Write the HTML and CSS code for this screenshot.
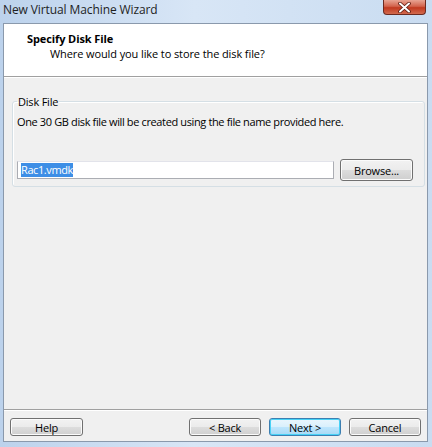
FILE: index.html
```html
<!DOCTYPE html>
<html lang="en">
<head>
  <meta charset="UTF-8">
  <meta name="viewport" content="width=device-width, initial-scale=1.0">
  <title>New Virtual Machine Wizard</title>
  <link rel="stylesheet" href="styles.css">
</head>
<body>
  <div class="window">
    <div class="titlebar">
      <span class="title">New Virtual Machine Wizard</span>
      <button class="close-button" aria-label="Close">
        <svg width="13" height="11" viewBox="0 0 13 11">
          <path d="M2 1.5 L11 9.5 M11 1.5 L2 9.5" stroke="#5a1a10" stroke-width="3.6" stroke-linecap="round"/>
          <path d="M2 1.5 L11 9.5 M11 1.5 L2 9.5" stroke="#fff" stroke-width="2" stroke-linecap="round"/>
        </svg>
      </button>
    </div>

    <div class="client">
      <div class="header">
        <div class="header-title">Specify Disk File</div>
        <div class="header-sub">Where would you like to store the disk file?</div>
      </div>

      <div class="content">
        <fieldset class="group">
          <legend>Disk File</legend>
          <p class="desc">One 30 GB disk file will be created using the file name provided here.</p>
          <div class="file-row">
            <div class="field"><span class="selected">Rac1.vmdk</span></div>
            <button class="btn browse-button">Browse...</button>
          </div>
        </fieldset>
      </div>

      <div class="footer">
        <button class="btn">Help</button>
        <div class="nav">
          <button class="btn">&lt; Back</button>
          <button class="btn default-button">Next &gt;</button>
          <button class="btn">Cancel</button>
        </div>
      </div>
    </div>
  </div>
</body>
</html>
```

FILE: styles.css
```css
body {
  margin: 0;
  font-family: "Open Sans", "Noto Sans", sans-serif;
  background: #c5d8ee;
}
.window {
  width: 432px;
  height: 447px;
  display: flex;
  flex-direction: column;
  background: linear-gradient(to right, #bcd2ec, #d8e6f6 45%, #c9dcf1);
}
.titlebar {
  height: 23px;
  display: flex;
  justify-content: space-between;
  align-items: flex-start;
}
.title {
  font-size: 12px;
  color: #1e1e1e;
  padding: 1px 0 0 3px;
  letter-spacing: -0.1px;
}
.close-button {
  width: 43px;
  height: 15px;
  margin-right: 6px;
  padding: 0;
  border: 1px solid #6b2a20;
  border-top: none;
  border-radius: 0 0 4px 4px;
  background: linear-gradient(to bottom, #e8a493, #d2634c 45%, #c1391f 55%, #d26a4e);
  display: flex;
  align-items: center;
  justify-content: center;
}
.client {
  flex: 1;
  margin: 0 4px 5px 3px;
  border: 1px solid #8a99ac;
  background: #f0f0f0;
  display: flex;
  flex-direction: column;
  font-size: 11px;
  color: #000;
}
.header {
  height: 53px;
  background: #fff;
  border-bottom: 1px solid #a0a0a0;
  box-shadow: 0 1px 0 #fff;
  padding: 7px 0 0 23px;
  box-sizing: border-box;
}
.header-title {
  font-weight: bold;
  font-size: 11px;
  line-height: 15px;
  letter-spacing: -0.1px;
}
.header-sub {
  padding-left: 23px;
  line-height: 15px;
  letter-spacing: -0.1px;
}
.content {
  flex: 1;
  padding: 18px 2px 0 8px;
}
.group {
  margin: 0;
  padding: 6px 0 5px 4px;
  border: 1px solid #d5dfe5;
  border-radius: 3px;
  box-shadow: inset 1px 1px 0 #fff;
}
.group legend {
  padding: 0 1px;
  margin-left: 0;
  line-height: 13px;
  letter-spacing: -0.2px;
}
.desc {
  margin: 0;
  line-height: 15px;
  letter-spacing: -0.37px;
}
.file-row {
  display: flex;
  align-items: center;
  margin-top: 30px;
}
.field {
  width: 312px;
  height: 16px;
  border: 1px solid #abadb3;
  border-top-color: #e2e3ea;
  background: #fff;
  display: flex;
  align-items: center;
  padding-left: 3px;
}
.selected {
  background: #3d8ee6;
  color: #fff;
  line-height: 14px;
  letter-spacing: -0.4px;
}
.btn {
  font-family: inherit;
  font-size: 11px;
  color: #000;
  width: 73px;
  height: 18px;
  padding: 0;
  border: 1px solid #707070;
  border-radius: 3px;
  background: linear-gradient(to bottom, #f2f2f2, #ebebeb 50%, #dddddd 50%, #cfcfcf);
  box-shadow: inset 0 0 0 1px #fbfbfb;
  letter-spacing: -0.2px;
}
.browse-button {
  height: 22px;
  margin-left: 6px;
}
.default-button {
  border-color: #3c7fb1;
  background: linear-gradient(to bottom, #eaf6fd, #d9f0fc 50%, #bee6fd 50%, #a7d9f5);
  box-shadow: inset 0 0 0 1px #48d2f6;
}
.footer {
  border-top: 1px solid #a0a0a0;
  box-shadow: inset 0 1px 0 #fff;
  height: 32px;
  box-sizing: border-box;
  padding: 8px 6px 0 6px;
  display: flex;
  justify-content: space-between;
  align-items: flex-start;
}
.nav {
  display: flex;
  gap: 8px;
}
.nav .btn {
  width: 72px;
}
```
